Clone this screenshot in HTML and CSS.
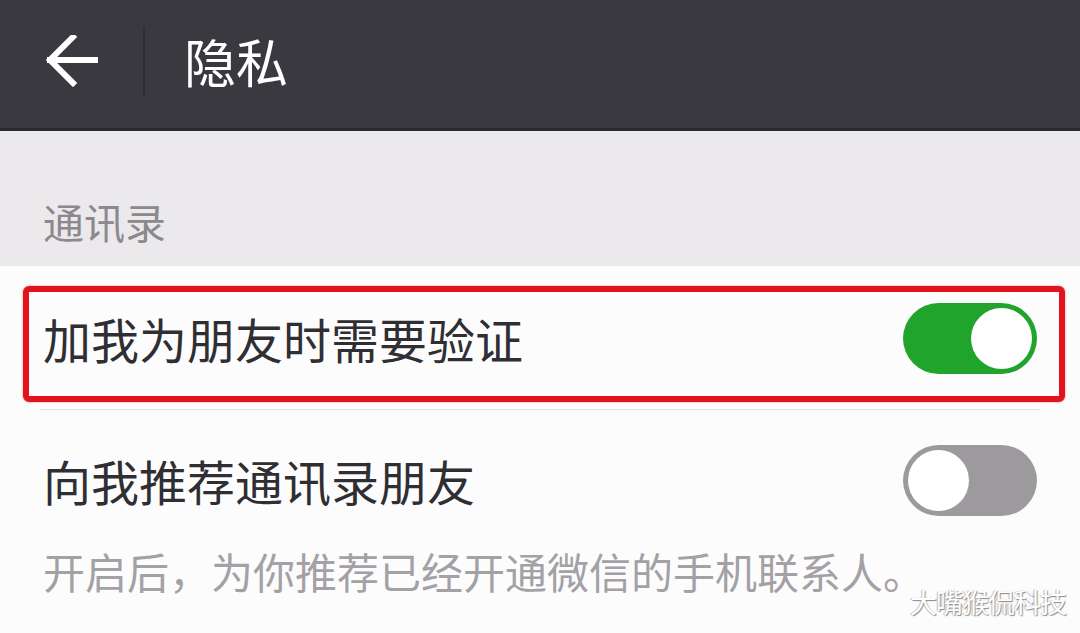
FILE: index.html
```html
<!DOCTYPE html>
<html lang="zh-CN">

<head>
    <meta charset="UTF-8">
    <meta name="viewport" content="width=device-width, initial-scale=1.0">
    <title>隐私</title>
    <link rel="stylesheet" href="styles.css">
</head>

<body>
    <header class="top-bar">
        <a class="back" href="#">
            <svg width="52" height="52" viewBox="0 0 52 52">
                <path d="M49 25 H4 M27 2 L4 25 L27 48" fill="none" stroke="#fff" stroke-width="6"
                    stroke-linecap="square" />
            </svg>
        </a>
        <span class="divider"></span>
        <h1 class="title">隐私</h1>
    </header>

    <div class="section-title">通讯录</div>

    <main class="list">
        <div class="row row-first">
            <span class="label">加我为朋友时需要验证</span>
            <span class="toggle on"><i class="knob"></i></span>
            <span class="mark"></span>
        </div>
        <div class="row row-second">
            <span class="label">向我推荐通讯录朋友</span>
            <span class="toggle"><i class="knob"></i></span>
        </div>
        <p class="desc">开启后，为你推荐已经开通微信的手机联系人。</p>
    </main>

    <div class="watermark">大嘴猴侃科技</div>
</body>

</html>
```

FILE: styles.css
```css
* {
    box-sizing: border-box;
}

body {
    margin: 0;
    background-color: #fdfcfd;
    font-family: "Noto Sans CJK SC", "Noto Sans", sans-serif;
    position: relative;
    height: 633px;
    overflow: hidden;
}

.top-bar {
    height: 131px;
    background-color: #3a3940;
    border-bottom: 3px solid #2c2b31;
    display: flex;
    align-items: center;
    padding-bottom: 6px;
}

.back {
    display: flex;
    margin-left: 46px;
}

.divider {
    width: 2px;
    height: 71px;
    background-color: #2e2d33;
    margin-left: 45px;
}

.title {
    margin: 0 0 0 39px;
    color: #fff;
    font-size: 52px;
    font-weight: 400;
    line-height: 52px;
}

.section-title {
    height: 135px;
    background-color: #ebe9ec;
    color: #8b898d;
    font-size: 41px;
    line-height: 41px;
    padding: 70px 0 0 43px;
}

.list {
    background-color: #fdfcfd;
}

.row {
    position: relative;
    display: flex;
    align-items: center;
    justify-content: space-between;
    padding: 0 43px;
}

.row-first {
    height: 144px;
}

.row-first::after {
    content: "";
    position: absolute;
    left: 40px;
    right: 40px;
    bottom: 0;
    height: 1px;
    background-color: #e2e0e3;
}

.row-second {
    height: 140px;
}

.label {
    font-size: 48px;
    line-height: 48px;
    color: #2f2e33;
}

.toggle {
    width: 134px;
    height: 71px;
    border-radius: 36px;
    background-color: #9d9a9e;
    padding: 5px;
    display: flex;
    justify-content: flex-start;
}

.toggle.on {
    background-color: #21a42b;
    justify-content: flex-end;
}

.knob {
    width: 61px;
    height: 61px;
    border-radius: 50%;
    background-color: #fff;
}

.mark {
    position: absolute;
    left: 23px;
    right: 15px;
    top: 20px;
    bottom: 8px;
    border: 6px solid #e2131b;
    border-radius: 6px;
    box-shadow: 0 0 2px rgba(226, 19, 27, 0.6);
}

.desc {
    margin: 0;
    padding-left: 43px;
    font-size: 42px;
    line-height: 42px;
    color: #a3a1a5;
}

.watermark {
    position: absolute;
    right: 14px;
    top: 587px;
    color: #fff;
    font-size: 27px;
    line-height: 30px;
    letter-spacing: -1px;
    text-shadow: 1px 1px 1px #8a8a8a, -1px 0 1px #bbb;
}
```
